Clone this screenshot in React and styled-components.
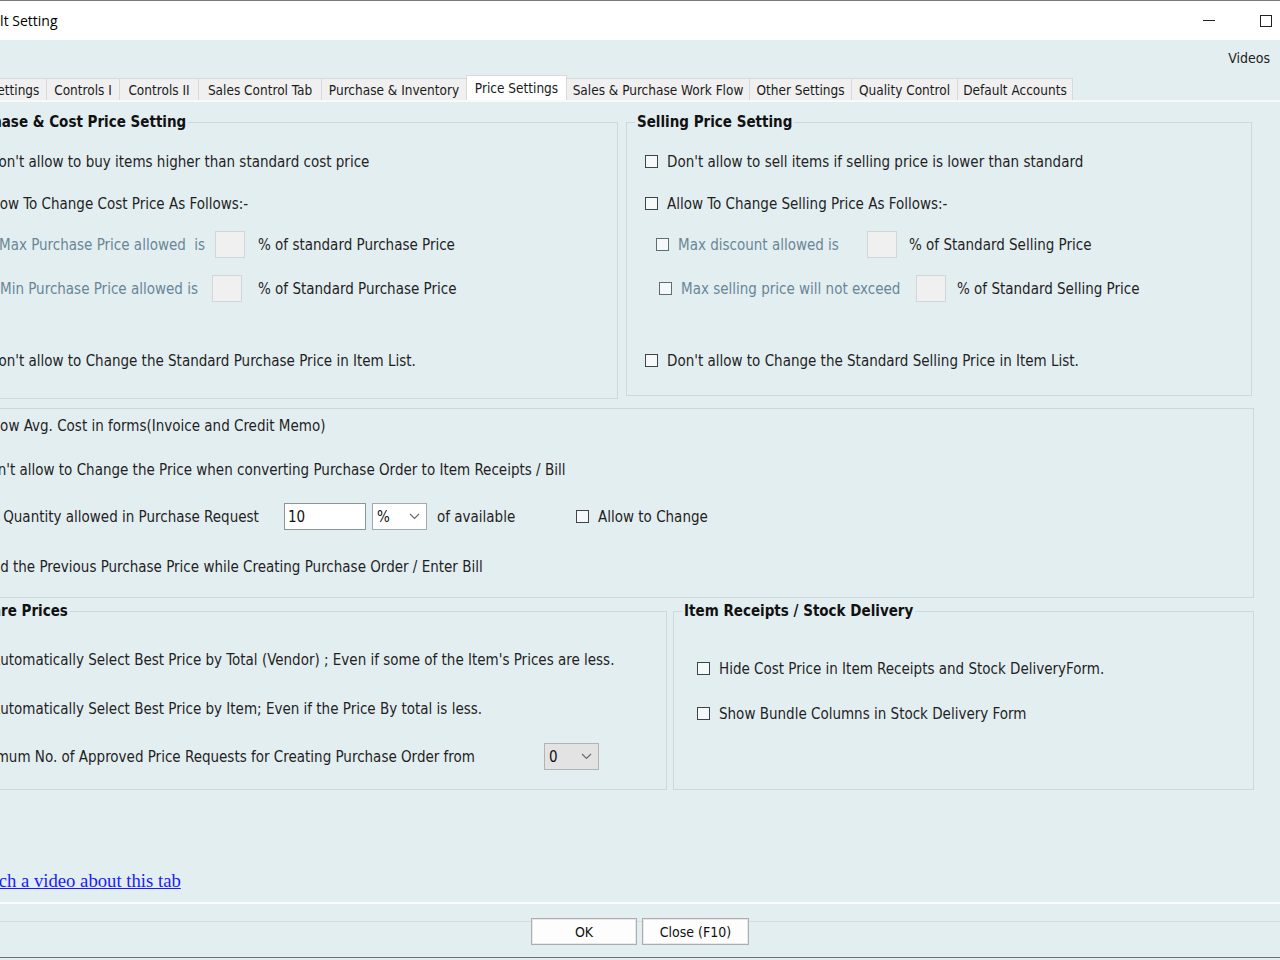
import React from 'react';
import styled, { createGlobalStyle } from 'styled-components';

const Global = createGlobalStyle`
  html, body { margin: 0; padding: 0; background: #e3eef1; overflow: hidden; }
  body { width: 1280px; height: 960px; }
  * { box-sizing: border-box; }
`;

const UI = `"DejaVu Sans Condensed", "Liberation Sans", sans-serif`;

const Window = styled.div`
  margin-left: -70px;
  width: 1350px;
  border-top: 1px solid #7b7b7b;
  border-bottom: 1px solid #6f6f6f;
  background: #e3eef1;
  font-family: ${UI};
  font-size: 15px;
  color: #1f1f24;
`;

const TitleBar = styled.div`
  height: 39px;
  background: #fff;
  display: flex;
  align-items: center;
  padding: 0 8px 0 31px;
  font-family: "Segoe UI", "Open Sans", sans-serif;
  font-size: 14px;
  color: #000;
`;
const TitleText = styled.span`
  flex: 1;
`;
const WinControls = styled.div`
  display: flex;
  align-items: center;
  gap: 45px;
`;
const MinIcon = styled.span`
  width: 12px;
  height: 1px;
  background: #222;
`;
const MaxIcon = styled.span`
  width: 12px;
  height: 12px;
  border: 1px solid #222;
`;

const TopBar = styled.div`
  height: 35px;
  display: flex;
  justify-content: flex-end;
  align-items: center;
  padding-right: 10px;
  font-size: 14px;
  color: #222;
`;

const TabStrip = styled.div`
  height: 25px;
  display: flex;
  align-items: flex-end;
  padding-left: 52px;
  font-size: 13.5px;
`;
const Tab = styled.div`
  position: relative;
  z-index: ${(p) => (p.$active ? 1 : 0)};
  flex: none;
  width: ${(p) => p.$w}px;
  height: ${(p) => (p.$active ? 25 : 22)}px;
  margin-right: -1px;
  display: flex;
  align-items: center;
  justify-content: center;
  background: ${(p) => (p.$active ? '#ffffff' : '#f0f0f0')};
  border: 1px solid #d9d9d9;
  border-bottom: none;
  white-space: nowrap;
  color: #1a1a1a;
`;
const TabLine = styled.div`
  height: 2px;
  background: #f8fafa;
`;

const GroupRow = styled.div`
  display: flex;
  align-items: ${(p) => (p.$stretch ? 'stretch' : 'flex-start')};
  gap: ${(p) => p.$gap}px;
  margin-left: ${(p) => p.$ml}px;
  margin-top: ${(p) => p.$mt}px;
`;
const Group = styled.fieldset`
  margin: 0;
  padding: 0 0 ${(p) => p.$pb}px 0;
  min-width: 0;
  width: ${(p) => p.$w}px;
  border: 1px solid #cdd8db;
  display: flex;
  flex-direction: column;
`;
const Legend = styled.legend`
  margin-left: 8px;
  padding: 0 2px;
  font-weight: bold;
  font-size: 15px;
  line-height: 18px;
  color: #111;
`;
const Panel = styled.div`
  margin: 9px 0 0 17px;
  width: 1307px;
  border: 1px solid #cdd8db;
  padding-bottom: 17px;
`;

const Row = styled.div`
  display: flex;
  align-items: center;
  height: 28px;
  margin-top: ${(p) => p.$mt}px;
  padding-left: ${(p) => p.$pl}px;
  padding-top: 1px;
  white-space: pre;
`;
const Check = styled.span`
  flex: none;
  width: 13px;
  height: 13px;
  border: 1px solid ${(p) => (p.$dim ? '#5e6c73' : '#404448')};
  background: #f6f9fa;
  margin-right: 9px;
`;
const Label = styled.span`
  color: ${(p) => (p.$dim ? '#6a8696' : 'inherit')};
  margin-left: ${(p) => p.$ml || 0}px;
  ${(p) => (p.$w ? `width: ${p.$w}px; flex: none;` : '')}
`;
const NumBox = styled.span`
  flex: none;
  width: 30px;
  height: 27px;
  background: #f0f0f0;
  border: 1px solid #d2d6d8;
`;
const TextInput = styled.input`
  flex: none;
  width: 82px;
  height: 27px;
  margin: 0;
  padding: 0 0 0 3px;
  background: #fff;
  border: 1px solid #8a9499;
  font-family: ${UI};
  font-size: 15px;
  color: #111;
  outline: none;
`;
const SelectBox = styled.div`
  flex: none;
  width: 55px;
  height: 27px;
  margin-left: ${(p) => p.$ml || 0}px;
  display: flex;
  align-items: center;
  justify-content: space-between;
  padding: 0 6px 0 4px;
  background: ${(p) => (p.$gray ? '#e3e3e3' : '#ffffff')};
  border: 1px solid ${(p) => (p.$gray ? '#b3b3b3' : '#a3abaf')};
  color: #111;
`;

const VideoLink = styled.a`
  display: block;
  width: max-content;
  margin: 80px 0 0 39px;
  font-family: "Liberation Serif", "Times New Roman", serif;
  font-size: 18.7px;
  line-height: 22px;
  color: #1a1aff;
  text-decoration: underline;
`;
const Separator = styled.div`
  margin-top: 10px;
  height: 2px;
  background: #fafcfd;
`;
const Footer = styled.div`
  margin-top: 17px;
  height: 36px;
  border-top: 1px solid #d3dcdf;
  display: flex;
  align-items: flex-start;
  gap: 5px;
  padding-left: 601px;
`;
const Button = styled.button`
  margin-top: -4px;
  width: ${(p) => p.$w}px;
  height: 27px;
  padding: 0;
  background: #fdfdfd;
  border: 1px solid #adadad;
  box-shadow: inset 0 0 0 1px #e8e8e8;
  font-family: ${UI};
  font-size: 14px;
  color: #111;
`;

const Chevron = () => (
  <svg width="11" height="7" viewBox="0 0 11 7">
    <polyline points="1,1 5.5,5.5 10,1" fill="none" stroke="#6b6b6b" strokeWidth="1.2" />
  </svg>
);

const tabs = [
  ['Settings', 65],
  ['Controls I', 74],
  ['Controls II', 80],
  ['Sales Control Tab', 124],
  ['Purchase & Inventory', 146],
  ['Price Settings', 101, true],
  ['Sales & Purchase Work Flow', 184],
  ['Other Settings', 103],
  ['Quality Control', 107],
  ['Default Accounts', 116],
];

export default function App() {
  return (
    <>
      <Global />
      <Window>
        <TitleBar>
          <TitleText>Default Setting</TitleText>
          <WinControls>
            <MinIcon />
            <MaxIcon />
          </WinControls>
        </TitleBar>
        <TopBar>Videos</TopBar>
        <TabStrip>
          {tabs.map(([t, w, a]) => (
            <Tab key={t} $w={w} $active={a}>
              {t}
            </Tab>
          ))}
        </TabStrip>
        <TabLine />

        <GroupRow $ml={17} $mt={11} $gap={8}>
          <Group $w={671} $pb={24}>
            <Legend>Purchase &amp; Cost Price Setting</Legend>
            <Row $mt={16} $pl={18}>
              <Check />
              <Label>Don't allow to buy items higher than standard cost price</Label>
            </Row>
            <Row $mt={14} $pl={13}>
              <Check />
              <Label>Allow To Change Cost Price As Follows:-</Label>
            </Row>
            <Row $mt={13} $pl={29}>
              <Check $dim />
              <Label $dim $w={216}>Max Purchase Price allowed  is</Label>
              <NumBox />
              <Label $ml={13}>% of standard Purchase Price</Label>
            </Row>
            <Row $mt={16} $pl={30}>
              <Check $dim />
              <Label $dim $w={212}>Min Purchase Price allowed is</Label>
              <NumBox />
              <Label $ml={16}>% of Standard Purchase Price</Label>
            </Row>
            <Row $mt={44} $pl={18}>
              <Check />
              <Label>Don't allow to Change the Standard Purchase Price in Item List.</Label>
            </Row>
          </Group>
          <Group $w={626} $pb={21}>
            <Legend>Selling Price Setting</Legend>
            <Row $mt={16} $pl={18}>
              <Check />
              <Label>Don't allow to sell items if selling price is lower than standard</Label>
            </Row>
            <Row $mt={14} $pl={18}>
              <Check />
              <Label>Allow To Change Selling Price As Follows:-</Label>
            </Row>
            <Row $mt={13} $pl={29}>
              <Check $dim />
              <Label $dim $w={189}>Max discount allowed is</Label>
              <NumBox />
              <Label $ml={12}>% of Standard Selling Price</Label>
            </Row>
            <Row $mt={16} $pl={32}>
              <Check $dim />
              <Label $dim $w={235}>Max selling price will not exceed</Label>
              <NumBox />
              <Label $ml={11}>% of Standard Selling Price</Label>
            </Row>
            <Row $mt={44} $pl={18}>
              <Check />
              <Label>Don't allow to Change the Standard Selling Price in Item List.</Label>
            </Row>
          </Group>
        </GroupRow>

        <Panel>
          <Row $mt={2} $pl={13}>
            <Check />
            <Label>Show Avg. Cost in forms(Invoice and Credit Memo)</Label>
          </Row>
          <Row $mt={16} $pl={9}>
            <Check />
            <Label>Don't allow to Change the Price when converting Purchase Order to Item Receipts / Bill</Label>
          </Row>
          <Row $mt={19} $pl={23}>
            <Label $w={313}>Max Quantity allowed in Purchase Request</Label>
            <TextInput readOnly defaultValue="10" />
            <SelectBox $ml={6}>
              <span>%</span>
              <Chevron />
            </SelectBox>
            <Label $ml={10} $w={139}>of available</Label>
            <Check />
            <Label>Allow to Change</Label>
          </Row>
          <Row $mt={22} $pl={8}>
            <Check />
            <Label>Hold the Previous Purchase Price while Creating Purchase Order / Enter Bill</Label>
          </Row>
        </Panel>

        <GroupRow $ml={8} $mt={4} $gap={6} $stretch>
          <Group $w={729} $pb={19}>
            <Legend>Compare Prices</Legend>
            <Row $mt={25} $pl={30}>
              <Check />
              <Label>Automatically Select Best Price by Total (Vendor) ; Even if some of the Item's Prices are less.</Label>
            </Row>
            <Row $mt={21} $pl={30}>
              <Check />
              <Label>Automatically Select Best Price by Item; Even if the Price By total is less.</Label>
            </Row>
            <Row $mt={20} $pl={29}>
              <Label $w={576}>Minimum No. of Approved Price Requests for Creating Purchase Order from</Label>
              <SelectBox $gray>
                <span>0</span>
                <Chevron />
              </SelectBox>
            </Row>
          </Group>
          <Group $w={581} $pb={0}>
            <Legend>Item Receipts / Stock Delivery</Legend>
            <Row $mt={34} $pl={23}>
              <Check />
              <Label>Hide Cost Price in Item Receipts and Stock DeliveryForm.</Label>
            </Row>
            <Row $mt={17} $pl={23}>
              <Check />
              <Label>Show Bundle Columns in Stock Delivery Form</Label>
            </Row>
          </Group>
        </GroupRow>

        <VideoLink href="#">Watch a video about this tab</VideoLink>
        <Separator />
        <Footer>
          <Button $w={106}>OK</Button>
          <Button $w={107}>Close (F10)</Button>
        </Footer>
      </Window>
    </>
  );
}
